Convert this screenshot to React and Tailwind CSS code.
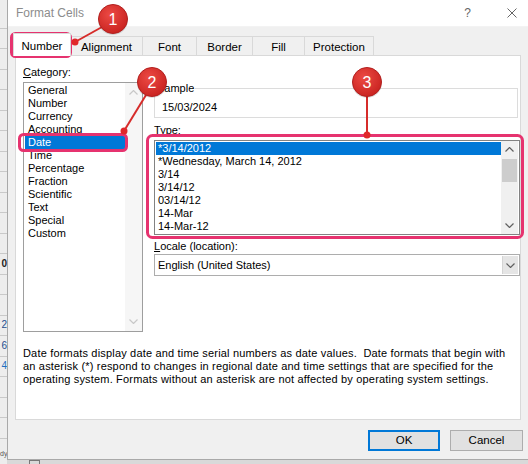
import React from 'react';

const categories = ['General', 'Number', 'Currency', 'Accounting', 'Date', 'Time', 'Percentage', 'Fraction', 'Scientific', 'Text', 'Special', 'Custom'];
const types = ['*3/14/2012', '*Wednesday, March 14, 2012', '3/14', '3/14/12', '03/14/12', '14-Mar', '14-Mar-12'];
const tabs = [
    { label: 'Number', w: 'w-[58px]', active: true },
    { label: 'Alignment', w: 'w-[72px]' },
    { label: 'Font', w: 'w-[54px]' },
    { label: 'Border', w: 'w-[56px]' },
    { label: 'Fill', w: 'w-[52px]' },
    { label: 'Protection', w: 'w-[69px]' },
];

const Chevron = ({ up, color = '#606060' }) => (
    <svg width="9" height="5" viewBox="0 0 9 5">
        <polyline
            points={up ? '0.5,4.5 4.5,0.5 8.5,4.5' : '0.5,0.5 4.5,4.5 8.5,0.5'}
            fill="none"
            stroke={color}
            strokeWidth="1.2"
        />
    </svg>
);

const Badge = ({ cx, cy, n }) => (
    <g>
        <circle cx={cx} cy={cy + 1} r="15" fill="#00000022" />
        <circle cx={cx} cy={cy} r="14.5" fill="url(#badge)" stroke="#b3201f" strokeWidth="1" />
        <text x={cx} y={cy + 5.5} textAnchor="middle" fill="#fff" fontSize="16" fontFamily="Liberation Sans, Arial, sans-serif">{n}</text>
    </g>
);

const Annotations = () => (
    <svg className="absolute inset-0 pointer-events-none" width="528" height="464">
        <defs>
            <radialGradient id="badge" cx="40%" cy="35%" r="70%">
                <stop offset="0%" stopColor="#ec4a44" />
                <stop offset="100%" stopColor="#c8221f" />
            </radialGradient>
        </defs>
        {/* highlight boxes */}
        <rect x="11.5" y="33.5" width="59" height="23" rx="4" fill="none" stroke="#e6336f" strokeWidth="3" />
        <rect x="19.5" y="134.5" width="107" height="16" rx="4" fill="none" stroke="#e6336f" strokeWidth="3" />
        <rect x="147.5" y="135.5" width="375" height="102" rx="5" fill="none" stroke="#e6336f" strokeWidth="3" />
        {/* leader lines */}
        <line x1="102" y1="27" x2="75" y2="42" stroke="#d62c2a" strokeWidth="2" />
        <circle cx="75" cy="42" r="3.5" fill="#e0282a" />
        <line x1="146" y1="95" x2="124" y2="131" stroke="#d62c2a" strokeWidth="2" />
        <circle cx="124" cy="131" r="3.5" fill="#e0282a" />
        <line x1="367" y1="96" x2="367" y2="135" stroke="#d62c2a" strokeWidth="2" />
        <circle cx="367" cy="135" r="3.5" fill="#e0282a" />
        <Badge cx={113} cy={19} n="1" />
        <Badge cx={152} cy={82} n="2" />
        <Badge cx={367} cy={82} n="3" />
    </svg>
);

const SheetStrip = () => {
    const rows = Array.from({ length: 21 });
    const glyphs = { 12: { t: '0', c: 'text-[#222] font-bold' }, 15: { t: '2', c: 'text-[#1f4f8f]' }, 16: { t: '6', c: 'text-[#1f4f8f]' }, 17: { t: '4', c: 'text-[#1f6fc0]' } };
    return (
        <div className="w-[7px] h-full bg-[#ededed] overflow-hidden flex flex-col pt-[8px]">
            {rows.map((_, i) => (
                <div key={i} className="h-[20.5px] shrink-0 border-b border-[#c9c9c9] flex items-center justify-end">
                    {glyphs[i] && <span className={`text-[10px] leading-none ${glyphs[i].c}`}>{glyphs[i].t}</span>}
                </div>
            ))}
            <div className="mt-auto mb-[6px] text-[7px] leading-[8px] text-[#555]">dy</div>
        </div>
    );
};

export default function App() {
    return (
        <div className="relative w-[528px] h-[464px] overflow-hidden bg-[#d9d9d9] font-['Liberation_Sans',Arial,sans-serif] text-[11px] leading-[13px] text-black">
            <div className="flex h-[464px]">
                <SheetStrip />
                <div className="flex-1 flex flex-col">
                    <div className="h-[460px] flex flex-col bg-[#f0f0f0] border-l border-b border-[#a9a9a9]">
                        {/* title bar */}
                        <div className="h-[27px] bg-white flex items-center pl-[8px] pr-[11px] border-b border-[#f3f3f3]">
                            <span className="text-[12px] text-[#8c8c8c]">Format Cells</span>
                            <span className="ml-auto text-[12px] text-[#666] mr-[36px]">?</span>
                            <svg width="10" height="10" viewBox="0 0 10 10">
                                <path d="M0.5 0.5 L9.5 9.5 M9.5 0.5 L0.5 9.5" stroke="#666" strokeWidth="1" />
                            </svg>
                        </div>

                        {/* tabs */}
                        <div className="h-[28px] flex items-end pl-[5px]">
                            {tabs.map((t) =>
                                t.active ? (
                                    <div key={t.label} className={`${t.w} h-[23px] -mb-[1px] relative z-10 bg-white border border-b-0 border-[#d9d9d9] flex items-center justify-center pt-[3px] text-[11.5px]`}>
                                        {t.label}
                                    </div>
                                ) : (
                                    <div key={t.label} className={`${t.w} h-[19px] bg-[#f0f0f0] border-t border-r border-[#d9d9d9] flex items-center justify-center pt-[3px] text-[11.5px]`}>
                                        {t.label}
                                    </div>
                                )
                            )}
                        </div>

                        {/* panel */}
                        <div className="ml-[7px] w-[506px] h-[365px] bg-white border border-[#d9d9d9] pl-[7px] pt-[10px]">
                            <div className="flex gap-[11px]">
                                <div className="w-[120px]">
                                    <div><u>C</u>ategory:</div>
                                    <div className="mt-[3px] h-[250px] border border-[#9e9e9e] flex">
                                        <div className="flex-1 pt-[1px] pl-[1px]">
                                            {categories.map((c) => (
                                                <div key={c} className={`h-[13px] pl-[3px] ${c === 'Date' ? 'bg-[#0078d7] text-white' : ''}`}>{c}</div>
                                            ))}
                                        </div>
                                        <div className="w-[17px] bg-[#f6f6f6] flex flex-col items-center justify-between py-[7px]">
                                            <Chevron up color="#c8c8c8" />
                                            <Chevron color="#c8c8c8" />
                                        </div>
                                    </div>
                                </div>

                                <div className="w-[366px] pt-[16px]">
                                    <fieldset className="w-[364px] border border-[#dcdcdc] pb-[3px]">
                                        <legend className="ml-[1px] px-[1px]">Sample</legend>
                                        <div className="pl-[7px] pt-[6px]">15/03/2024</div>
                                    </fieldset>
                                    <div className="mt-[6px]"><u>T</u>ype:</div>
                                    <div className="mt-[3px] h-[95px] border border-[#828282] flex">
                                        <div className="flex-1 pt-[1px] pl-[1px]">
                                            {types.map((t, i) => (
                                                <div key={t} className={`h-[13px] pl-[2px] ${i === 0 ? 'bg-[#0078d7] text-white' : ''}`}>{t}</div>
                                            ))}
                                        </div>
                                        <div className="w-[17px] mr-[1px] bg-[#f0f0f0] flex flex-col items-center">
                                            <div className="h-[17px] flex items-center justify-center"><Chevron up /></div>
                                            <div className="mt-[1px] w-[15px] h-[23px] bg-[#cdcdcd]" />
                                            <div className="mt-auto h-[17px] flex items-center justify-center"><Chevron /></div>
                                        </div>
                                    </div>
                                    <div className="mt-[5px]"><u>L</u>ocale (location):</div>
                                    <div className="mt-[1px] h-[22px] border border-[#adadad] flex items-stretch">
                                        <div className="flex-1 flex items-center pl-[3px]">English (United States)</div>
                                        <div className="w-[16px] mr-[1px] my-[1px] bg-[#e5e5e5] border-l border-[#d4d4d4] flex items-center justify-center">
                                            <Chevron />
                                        </div>
                                    </div>
                                </div>
                            </div>

                            <div className="mt-[15px] whitespace-nowrap tracking-[0.18px]">
                                <div>Date formats display date and time serial numbers as date values.&nbsp; Date formats that begin with</div>
                                <div>an asterisk (*) respond to changes in regional date and time settings that are specified for the</div>
                                <div>operating system. Formats without an asterisk are not affected by operating system settings.</div>
                            </div>
                        </div>

                        {/* buttons */}
                        <div className="mt-[10px] flex justify-end gap-[10px] pr-[5px]">
                            <button className="w-[72px] h-[21px] bg-[#e1e1e1] border-2 border-[#0078d7] text-[11.5px]">OK</button>
                            <button className="w-[73px] h-[21px] bg-[#e1e1e1] border border-[#adadad] text-[11.5px]">Cancel</button>
                        </div>
                    </div>
                    <div className="flex-1 pl-[22px]">
                        <div className="w-[11px] h-[4px] border border-b-0 border-[#777]" />
                    </div>
                </div>
            </div>
            <Annotations />
        </div>
    );
}
